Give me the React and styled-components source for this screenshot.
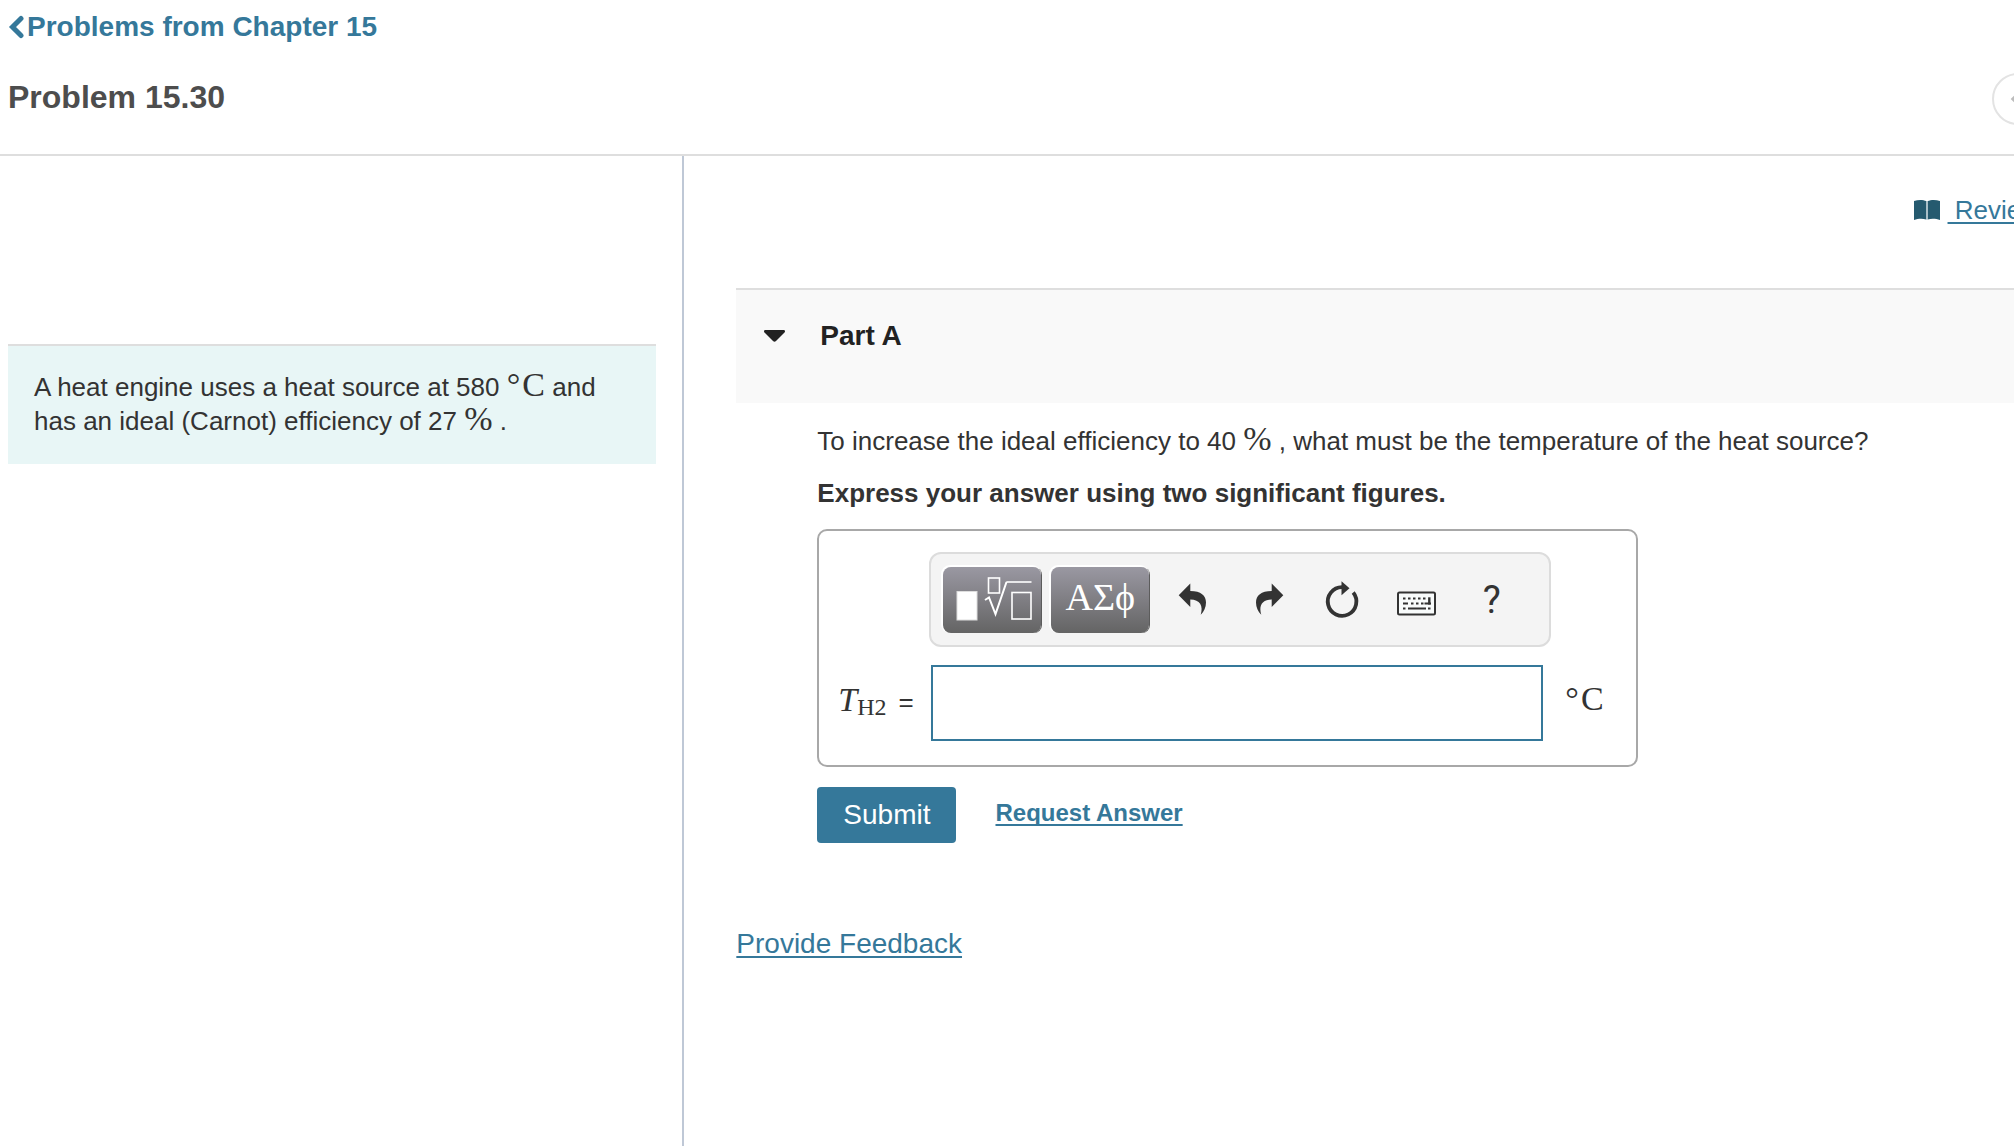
import React from "react";
import styled, { createGlobalStyle } from "styled-components";

const GlobalStyle = createGlobalStyle`
  * {
    box-sizing: border-box;
  }

  body {
    margin: 0;
    background-color: #fff;
    color: #333;
    font-family: "Liberation Sans", Arial, sans-serif;
    font-size: 26px;
    line-height: 34px;
    overflow-x: hidden;
  }
`;

const Viewport = styled.div`
  overflow: hidden;
`;

// the course page is a little wider than the frame that holds it
const Page = styled.div`
  display: flex;
  flex-direction: column;
  width: calc(100% + 39px);
  min-height: 100vh;
`;

const Header = styled.header`
  padding: 11px 9px 29px 8px;
  border-bottom: 2px solid #dedede;
`;

const BackLink = styled.a`
  display: flex;
  align-items: center;
  gap: 1px;
  width: fit-content;
  color: #35789a;
  font-size: 28px;
  font-weight: 700;
  line-height: 32px;
  text-decoration: none;
`;

const TitleRow = styled.div`
  display: flex;
  align-items: center;
  justify-content: space-between;
  margin-top: 30px;
`;

const Title = styled.h1`
  margin: 0;
  padding-bottom: 4px;
  color: #4d4d4d;
  font-size: 32px;
  line-height: 36px;
`;

const RoundButton = styled.button`
  display: flex;
  align-items: center;
  justify-content: center;
  width: 52px;
  height: 52px;
  padding: 0;
  border: 2px solid #e3e3e3;
  border-radius: 50%;
  background-color: #fff;
`;

const Main = styled.main`
  display: flex;
  flex: 1;
`;

const Left = styled.section`
  width: calc(100% / 3);
  padding: 188px 26px 0 8px;
  border-right: 2px solid #bfc8d6;
`;

const Statement = styled.p`
  margin: 0;
  padding: 24px 26px 26px;
  border-top: 2px solid #dedede;
  background-color: #e8f6f6;
`;

const Right = styled.section`
  flex: 1;
  padding: 38px 0 0 52px;
`;

const Tools = styled.div`
  display: flex;
  align-items: center;
  justify-content: flex-end;
  gap: 8px;
  padding-right: 13px;
  margin-bottom: 62px;
  line-height: 32px;
`;

const Link = styled.a`
  color: #35789a;
  font-size: ${(props) => props.$size || 26}px;
  font-weight: ${(props) => (props.$bold ? 700 : 400)};
  line-height: 32px;
  text-decoration-thickness: 2px;
  text-underline-offset: 3px;
  text-decoration-skip-ink: none;
  white-space: nowrap;
`;

const PartHeader = styled.button`
  display: flex;
  align-items: center;
  gap: 35px;
  width: 100%;
  padding: 30px 28px 51px;
  border: 0;
  border-top: 2px solid #dedede;
  background-color: #f9f9f9;
  color: #222;
  font-family: inherit;
  font-size: 28px;
  font-weight: 700;
  line-height: 32px;
`;

const PartBody = styled.div`
  padding: 21px 0 0 81px;
`;

const Question = styled.p`
  margin: 0 0 18px;
`;

const Hint = styled.p`
  margin: 0 0 19px;
  font-weight: 700;
`;

const Unit = styled.span`
  font-family: "Liberation Serif", serif;
  font-size: 34px;
  line-height: 1px;
`;

const Degree = styled.span`
  margin-right: 2px;
`;

const AnswerBox = styled.div`
  display: grid;
  grid-template-columns: 91px 622px auto;
  align-items: center;
  row-gap: 18px;
  width: 821px;
  padding: 21px 19px 24px;
  border: 2px solid #a8a8a8;
  border-radius: 10px;
`;

const Toolbar = styled.div`
  grid-column: 2;
  display: flex;
  align-items: center;
  height: 95px;
  padding: 0 12px;
  border: 2px solid #dcdcdc;
  border-radius: 12px;
  background-color: #f4f4f4;
`;

const DarkButton = styled.button`
  display: flex;
  align-items: center;
  justify-content: center;
  width: 98px;
  height: 66px;
  padding: 0;
  border: 0;
  border-radius: 8px;
  background: linear-gradient(#9a98a2, #646464);
  box-shadow: -1px -1px 0 1px #fff, 1px 0 0 #5c5c5c;
  color: #fff;
  font-family: "Liberation Serif", "DejaVu Serif", serif;
  font-size: 38px;

  & + & {
    margin: 0 5px 0 10px;
    padding-bottom: 6px;
  }
`;

const IconButton = styled.button`
  display: flex;
  align-items: center;
  justify-content: center;
  width: 75px;
  height: 66px;
  padding: 0;
  border: 0;
  background: none;
  color: #333;
  font-family: Roboto, sans-serif;
  font-size: 38px;
`;

const AnswerLabel = styled.label`
  grid-column: 1;
  padding-bottom: 4px;
  font-size: 26px;
  white-space: nowrap;
`;

const Variable = styled.i`
  font-family: "Liberation Serif", serif;
  font-size: 34px;
`;

const Subscript = styled.sub`
  margin-right: 12px;
  font-family: "Liberation Serif", serif;
  font-size: 24px;
  line-height: 1px;
  vertical-align: -4px;
`;

const AnswerInput = styled.input`
  width: 612px;
  height: 76px;
  margin-left: 2px;
  padding: 0 12px;
  border: 2px solid #35789a;
  background-color: #fff;
  color: #333;
  font-size: 32px;
  outline: none;
`;

const AnswerUnit = styled.div`
  padding: 0 0 4px 14px;
`;

const Actions = styled.div`
  display: flex;
  align-items: center;
  gap: 39px;
  margin-top: 20px;
`;

const Submit = styled.button`
  height: 56px;
  padding: 0 26px;
  border: 0;
  border-radius: 4px;
  background-color: #35789a;
  color: #fff;
  font-family: inherit;
  font-size: 28px;
`;

const RequestLink = styled(Link)`
  padding-bottom: 5px;
`;

const Feedback = styled.div`
  display: flex;
  margin-top: 85px;
`;

const ChevronIcon = () => (
  <svg width="18" height="24" viewBox="0 0 18 24" aria-hidden="true">
    <path
      d="M13 3.5 4.5 12l8.500 8.500"
      fill="none"
      stroke="#35789a"
      strokeWidth="5"
      strokeLinecap="round"
    />
  </svg>
);

const PreviousIcon = () => (
  <svg width="16" height="16" viewBox="0 0 16 16" aria-hidden="true">
    <path d="M9.500 2 3.500 8l6 6" fill="none" stroke="#bcbcbc" strokeWidth="4" />
  </svg>
);

const BookIcon = () => (
  <svg width="26" height="22" viewBox="0 0 26 22" aria-hidden="true">
    <path
      d="M0 2C4 .5 9 .5 12.200 2v18.500C9 19.500 4 19.500 0 21zM13.800 2C17 .5 22 .5 26 2v19c-4-1.500-9-1.500-12.200-.5z"
      fill="#255a6f"
    />
    <path d="M13 2v18.500" stroke="#9fb8c2" strokeWidth="1.600" />
  </svg>
);

const CaretIcon = () => (
  <svg width="21" height="12" viewBox="0 0 21 12" aria-hidden="true">
    <path
      d="M1.500 0h18c1.500 0 2 1.500 1 2.500l-8.500 8.500c-1 1-2 1-3 0L.5 2.500C-.5 1.500 0 0 1.500 0z"
      fill="#222"
    />
  </svg>
);

const RootIcon = () => (
  <svg width="98" height="66" viewBox="0 0 98 66" aria-hidden="true">
    <rect x="14" y="24.500" width="20" height="28.500" fill="#fff" stroke="#ddd" />
    <g fill="none" stroke="#fff" strokeWidth="1.600">
      <rect x="45.500" y="11" width="11" height="15" />
      <rect x="69" y="25.500" width="19" height="26.500" />
      <path d="M63.300 15H88.500" />
      <path d="M42 33l4-2.500 6.500 16.500L63.500 15" strokeWidth="2" />
    </g>
  </svg>
);

const UndoIcon = ({ flip }) => (
  <svg width="40" height="40" viewBox="0 0 40 40" aria-hidden="true">
    <path
      d="M6.700 15.300 18.300 3.500V11C29 11 34 15.500 34 22.500c0 5-2 9-5.300 12.300C31.500 26 28 19.500 18.300 19.500V27z"
      fill="#333"
      transform={flip ? "matrix(-1 0 0 1 43 0)" : undefined}
    />
  </svg>
);

const ResetIcon = () => (
  <svg width="40" height="40" viewBox="0 0 40 40" aria-hidden="true">
    <path
      d="M31.200 12.500A14.300 14.300 0 1 1 20 7.200"
      fill="none"
      stroke="#333"
      strokeWidth="3.800"
    />
    <path d="M19.500 1.300 27.500 8.300 19.500 15.300z" fill="#333" />
  </svg>
);

const KeyboardIcon = () => (
  <svg width="40" height="40" viewBox="0 0 40 40" aria-hidden="true">
    <rect
      x="1"
      y="12.500"
      width="37"
      height="22"
      rx="1.500"
      fill="#f8fbfb"
      stroke="#333"
      strokeWidth="2"
    />
    <path
      d="M6 18.500h2.500m2.500 0h2.500m2.500 0h2.500m2.500 0h2.500m2.500 0h2.500M6 23.500h5m3 0h2.500m2.500 0h2.500m2.500 0h2.500m1 0h6.500M6 28.500h2.500m2.500 0h18m2 0h2.500"
      stroke="#333"
      strokeWidth="2.200"
    />
    <path d="M32.300 17.300v7.300" stroke="#333" strokeWidth="2.400" />
  </svg>
);

const Celsius = () => (
  <Unit>
    <Degree>°</Degree>C
  </Unit>
);

const App = () => {
  return (
    <Viewport>
      <GlobalStyle />
      <Page>
        <Header>
          <BackLink href="#chapter">
            <ChevronIcon />
            Problems from Chapter 15
          </BackLink>
          <TitleRow>
            <Title>Problem 15.30</Title>
            <RoundButton aria-label="Previous problem">
              <PreviousIcon />
            </RoundButton>
          </TitleRow>
        </Header>
        <Main>
          <Left>
            <Statement>
              A heat engine uses a heat source at 580 <Celsius /> and has an
              ideal (Carnot) efficiency of 27 <Unit>%</Unit> .
            </Statement>
          </Left>
          <Right>
            <Tools>
              <BookIcon />
              <Link href="#review">&nbsp;Review</Link>
            </Tools>
            <PartHeader aria-expanded="true">
              <CaretIcon />
              Part A
            </PartHeader>
            <PartBody>
              <Question>
                To increase the ideal efficiency to 40 <Unit>%</Unit> , what must
                be the temperature of the heat source?
              </Question>
              <Hint>Express your answer using two significant figures.</Hint>
              <AnswerBox>
                <Toolbar>
                  <DarkButton aria-label="Templates">
                    <RootIcon />
                  </DarkButton>
                  <DarkButton aria-label="Symbols">ΑΣϕ</DarkButton>
                  <IconButton aria-label="Undo">
                    <UndoIcon />
                  </IconButton>
                  <IconButton aria-label="Redo">
                    <UndoIcon flip />
                  </IconButton>
                  <IconButton aria-label="Reset">
                    <ResetIcon />
                  </IconButton>
                  <IconButton aria-label="Keyboard shortcuts">
                    <KeyboardIcon />
                  </IconButton>
                  <IconButton aria-label="Help">?</IconButton>
                </Toolbar>
                <AnswerLabel htmlFor="answer">
                  <Variable>T</Variable>
                  <Subscript>H2</Subscript>=
                </AnswerLabel>
                <AnswerInput id="answer" type="text" />
                <AnswerUnit>
                  <Celsius />
                </AnswerUnit>
              </AnswerBox>
              <Actions>
                <Submit>Submit</Submit>
                <RequestLink href="#answer" $size={24} $bold>
                  Request Answer
                </RequestLink>
              </Actions>
            </PartBody>
            <Feedback>
              <Link href="#feedback" $size={28}>
                Provide Feedback
              </Link>
            </Feedback>
          </Right>
        </Main>
      </Page>
    </Viewport>
  );
};

export default App;
